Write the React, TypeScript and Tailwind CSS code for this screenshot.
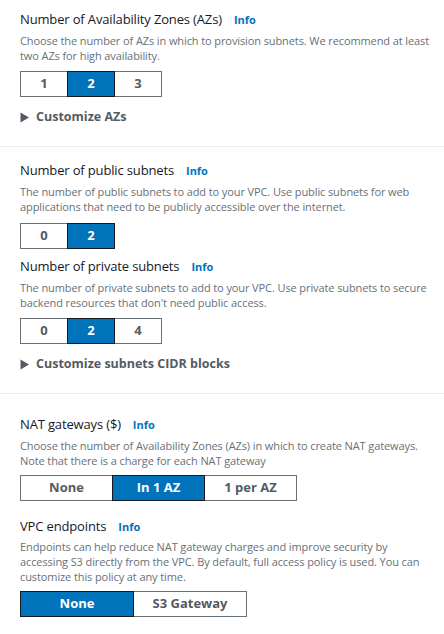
import React from "react";

type SegProps = {
  options: string[];
  selected: number;
  width: string;
};

const Segmented = ({ options, selected, width }: SegProps) => (
  <div className="flex">
    {options.map((opt, i) => (
      <div
        key={i}
        className={`${width} h-[26px] flex items-center justify-center border text-[13px] font-bold ${
          i > 0 ? "-ml-px" : ""
        } ${
          i === selected
            ? "relative z-10 bg-[#0073bb] border-[#16191f] text-white"
            : "bg-white border-[#687078] text-[#545b64]"
        }`}
      >
        {opt}
      </div>
    ))}
  </div>
);

const Title = ({ text, className = "" }: { text: string; className?: string }) => (
  <div className={`flex items-center gap-[12px] h-[20px] ${className}`}>
    <span className="text-[13px] tracking-[-0.15px] text-[#16191f]">{text}</span>
    <span className="text-[11px] font-bold text-[#0073bb]">Info</span>
  </div>
);

const Desc = ({ children, className = "" }: { children: React.ReactNode; className?: string }) => (
  <p className={`text-[11px] leading-[15px] tracking-[-0.1px] text-[#687078] ${className}`}>{children}</p>
);

const Expander = ({ text, className = "" }: { text: string; className?: string }) => (
  <div className={`flex items-center h-[20px] ${className}`}>
    <svg width="10" height="11" viewBox="0 0 10 11">
      <path d="M0.5 0.5 L9 5.5 L0.5 10.5 Z" fill="#545b64" />
    </svg>
    <span className="ml-[6px] text-[12.5px] font-bold text-[#545b64]">{text}</span>
  </div>
);

export default function App() {
  return (
    <div className="w-[444px] h-[634px] bg-white overflow-hidden" style={{ fontFamily: '"Open Sans", sans-serif' }}>
      <section className="pl-5 pr-[10px] pt-[10px] pb-[19px] border-b border-[#eaeded]">
        <Title text="Number of Availability Zones (AZs)" />
        <Desc className="mt-[3px]">
          Choose the number of AZs in which to provision subnets. We recommend at least two AZs for high availability.
        </Desc>
        <div className="mt-[8px]">
          <Segmented options={["1", "2", "3"]} selected={1} width="w-[48px]" />
        </div>
        <Expander text="Customize AZs" className="mt-[10px]" />
      </section>

      <section className="pl-5 pr-[10px] pt-[14px] pb-[19px] border-b border-[#eaeded]">
        <Title text="Number of public subnets" />
        <Desc className="mt-[3px]">
          The number of public subnets to add to your VPC. Use public subnets for web applications that need to be publicly accessible over the internet.
        </Desc>
        <div className="mt-[9px]">
          <Segmented options={["0", "2"]} selected={1} width="w-[48px]" />
        </div>
        <Title text="Number of private subnets" className="mt-[8px]" />
        <Desc className="mt-[3px]">
          The number of private subnets to add to your VPC. Use private subnets to secure backend resources that don't need public access.
        </Desc>
        <div className="mt-[8px]">
          <Segmented options={["0", "2", "4"]} selected={1} width="w-[48px]" />
        </div>
        <Expander text="Customize subnets CIDR blocks" className="mt-[10px]" />
      </section>

      <section className="pl-5 pr-[10px] pt-[21px]">
        <Title text="NAT gateways ($)" />
        <Desc className="mt-[3px]">
          Choose the number of Availability Zones (AZs) in which to create NAT gateways. Note that there is a charge for each NAT gateway
        </Desc>
        <div className="mt-[7px]">
          <Segmented options={["None", "In 1 AZ", "1 per AZ"]} selected={1} width="w-[93px]" />
        </div>
        <Title text="VPC endpoints" className="mt-[16px]" />
        <Desc className="mt-[2px]">
          Endpoints can help reduce NAT gateway charges and improve security by accessing S3 directly from the VPC. By default, full access policy is used. You can customize this policy at any time.
        </Desc>
        <div className="mt-[7px]">
          <Segmented options={["None", "S3 Gateway"]} selected={0} width="w-[114px]" />
        </div>
      </section>
    </div>
  );
}
